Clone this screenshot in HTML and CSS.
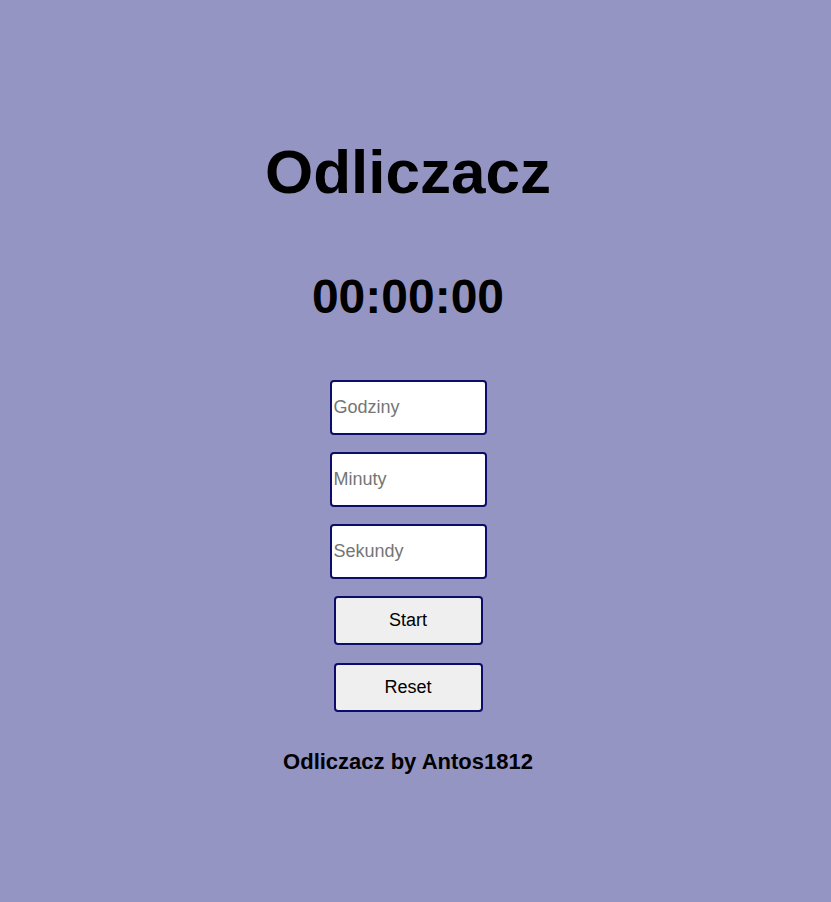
FILE: index.html
```html
<!DOCTYPE html>
<html lang="pl">
<head>
<meta charset="utf-8">
<title>Odliczacz</title>
<link rel="stylesheet" href="styles.css">
</head>
<body>
<main class="app">
  <h1 class="title">Odliczacz</h1>
  <div class="timer">00:00:00</div>
  <div class="inputs">
    <input class="field" type="number" placeholder="Godziny">
    <input class="field" type="number" placeholder="Minuty">
    <input class="field" type="number" placeholder="Sekundy">
  </div>
  <div class="buttons">
    <button class="btn" type="button">Start</button>
    <button class="btn" type="button">Reset</button>
  </div>
  <p class="footer">Odliczacz by Antos1812</p>
</main>
</body>
</html>
```

FILE: styles.css
```css
html, body {
  margin: 0;
  padding: 0;
}
body {
  background: #9595c3;
  font-family: "Liberation Sans", Arial, sans-serif;
  color: #000;
  min-height: 902px;
}
.app {
  display: flex;
  flex-direction: column;
  align-items: center;
  padding-top: 136px;
  padding-right: 15px;
}
.title {
  margin: 0;
  font-size: 62px;
  font-weight: bold;
  line-height: 72px;
}
.timer {
  margin-top: 61px;
  font-size: 48px;
  font-weight: bold;
  line-height: 56px;
}
.inputs {
  margin-top: 55px;
  display: flex;
  flex-direction: column;
  align-items: center;
  gap: 17px;
}
.field {
  box-sizing: border-box;
  width: 157px;
  height: 55px;
  border: 2px solid #0c0c6a;
  border-radius: 4px;
  background: #fff;
  padding: 0 2px;
  font-family: "Liberation Sans", Arial, sans-serif;
  font-size: 18px;
  color: #000;
  -moz-appearance: textfield;
}
.field::-webkit-outer-spin-button,
.field::-webkit-inner-spin-button {
  -webkit-appearance: none;
  margin: 0;
}
.field::placeholder {
  color: #757575;
}
.buttons {
  margin-top: 17px;
  display: flex;
  flex-direction: column;
  align-items: center;
  gap: 18px;
}
.btn {
  box-sizing: border-box;
  width: 149px;
  height: 49px;
  border: 2px solid #0c0c6a;
  border-radius: 4px;
  background: #efefef;
  font-family: "Liberation Sans", Arial, sans-serif;
  font-size: 18px;
  color: #000;
}
.footer {
  margin: 38px 0 0;
  font-size: 22px;
  font-weight: bold;
  line-height: 24px;
}
```
